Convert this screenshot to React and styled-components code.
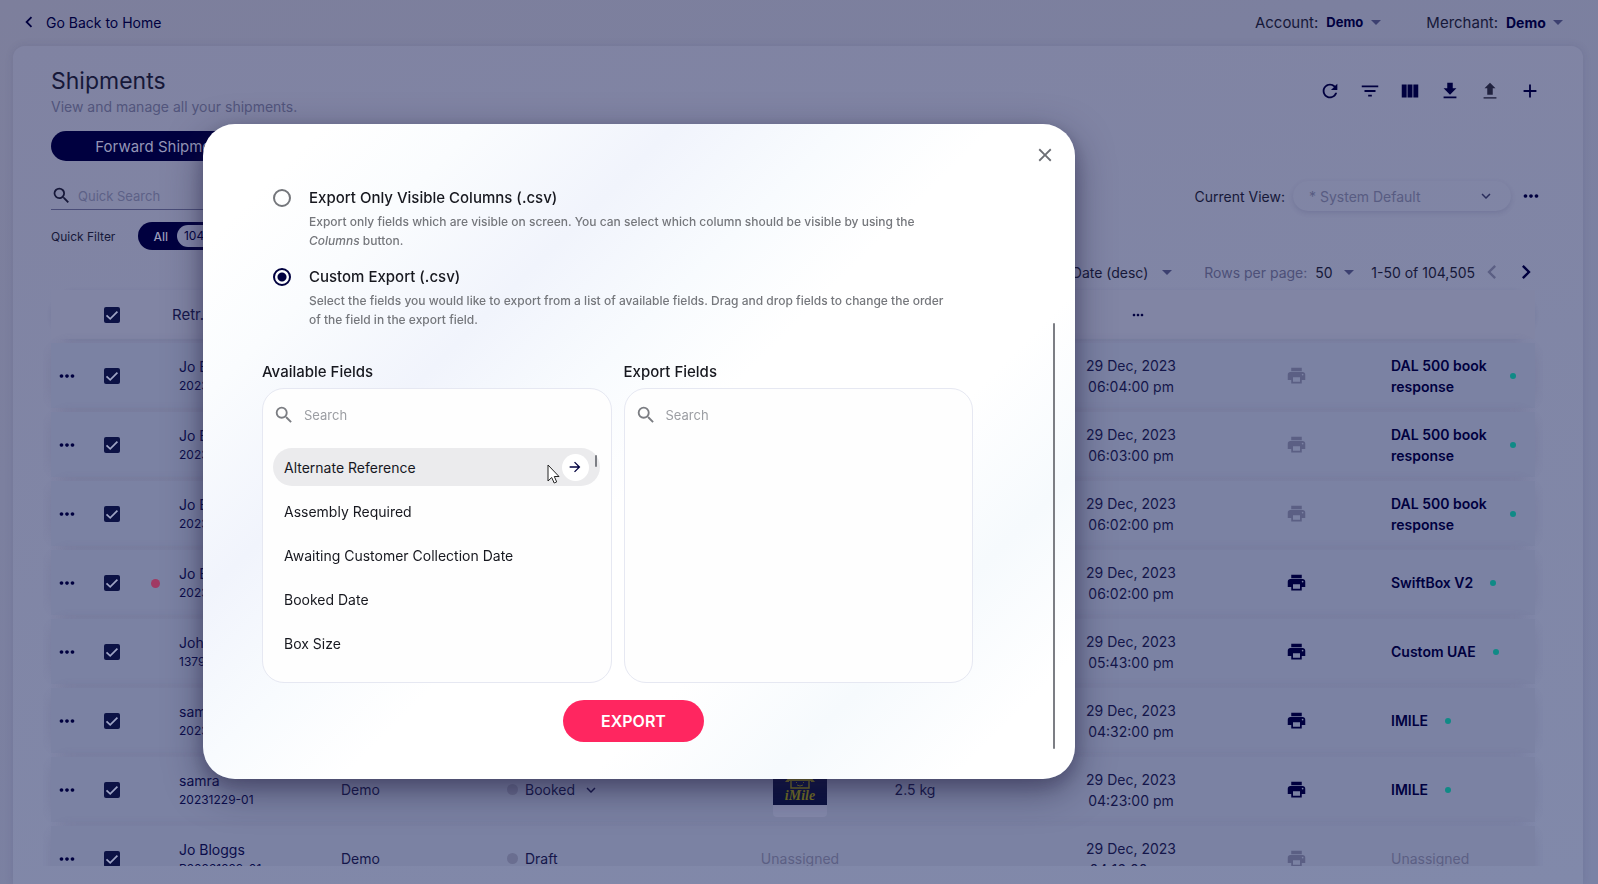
import React from "react";
import styled, { createGlobalStyle } from "styled-components";
import {
  MdRefresh, MdFilterList, MdViewColumn, MdFileDownload, MdAdd, MdMoreHoriz, MdSearch, MdClose,
  MdArrowDropDown, MdExpandMore, MdChevronLeft, MdChevronRight, MdLocalPrintshop, MdArrowForward,
} from "react-icons/md";

const navy = "#00003f";
const ink = "#161839";

const GlobalStyle = createGlobalStyle`
  * { box-sizing: border-box; }
  body {
    margin: 0;
    overflow: hidden;
    font-family: Inter, "Liberation Sans", sans-serif;
    font-size: 14px;
    color: ${ink};
    background: linear-gradient(160deg, #7d7f9c, #7a82a5);
  }
  button, input, select { font: inherit; color: inherit; }
  svg { display: block; flex: none; }
`;

const Page = styled.div`
  height: 100vh;
  display: flex;
  flex-direction: column;
  overflow: hidden;
`;

const TopBar = styled.header`
  height: 46px;
  flex: none;
  display: flex;
  align-items: center;
  padding: 0 28px 2px 18px;
  font-size: 15px;
`;

const BackLink = styled.a`
  display: flex;
  align-items: center;
  gap: 6px;
  margin-right: auto;
  color: ${navy};
  font-size: 14px;
  text-decoration: none;
`;

const Picker = styled.label`
  display: flex;
  align-items: center;
  margin-left: ${(p) => p.$gap || 0}px;
  color: ${(p) => p.$color || ink};
  white-space: nowrap;
`;

const PlainSelect = styled.select`
  appearance: none;
  border: 0;
  background: none;
  padding: 0;
  margin: 0 0 0 8px;
  width: ${(p) => p.$width}px;
  font-weight: ${(p) => (p.$bold ? 700 : 400)};
  font-size: ${(p) => p.$size || 14}px;
  color: ${(p) => (p.$bold ? navy : ink)};
`;

const Arrow = styled(MdArrowDropDown)`
  color: #3c4070;
`;

const Card = styled.main`
  flex: 1;
  min-height: 0;
  display: flex;
  flex-direction: column;
  margin: 0 15px 0 13px;
  padding: 20px 38px 18px;
  border-radius: 12px 12px 0 0;
  background: linear-gradient(170deg, #8083a2, #8189aa);
  box-shadow: 0 0 8px rgba(40, 40, 90, 0.12);
`;

const Bar = styled.div`
  flex: none;
  display: flex;
  align-items: ${(p) => p.$align || "center"};
  justify-content: space-between;
  height: ${(p) => p.$height}px;
`;

const Title = styled.h1`
  margin: 0;
  font-size: 23px;
  line-height: 30px;
  font-weight: 400;
`;

const Subtitle = styled.p`
  margin: 0;
  font-size: 14px;
  line-height: 22px;
  color: #52557c;
`;

const Tools = styled.div`
  display: flex;
  gap: 16px;
  padding: 0 3px 2px 0;
`;

const IconButton = styled.button`
  display: flex;
  align-items: center;
  justify-content: center;
  flex: none;
  width: ${(p) => p.$size || 24}px;
  height: ${(p) => p.$size || 24}px;
  padding: 0;
  border: 0;
  background: none;
  color: ${(p) => p.$color || navy};
`;

const Tab = styled.button`
  width: 226px;
  height: 30px;
  border: 0;
  border-radius: 15px;
  padding: 0;
  background: ${navy};
  color: #9496b6;
  font-size: 15px;
`;

const QuickSearch = styled.label`
  display: flex;
  align-items: center;
  gap: 6px;
  width: 300px;
  height: 32px;
  margin-top: 4px;
  padding-top: 4px;
  border-bottom: 1px solid #4a4d78;
  input {
    border: 0;
    padding: 0;
    background: none;
    outline: 0;
    font-size: 13px;
  }
  input::placeholder { color: #5d6187; opacity: 1; }
`;

const ViewGroup = styled.div`
  display: flex;
  align-items: center;
  padding: 7px 2px 0 0;
`;

const ViewSelect = styled.label`
  display: flex;
  align-items: center;
  gap: 8px;
  span { white-space: nowrap; }
`;

const ViewField = styled.div`
  display: flex;
  align-items: center;
  width: 218px;
  height: 30px;
  padding: 0 16px;
  margin-right: 8px;
  border-radius: 15px;
  color: #585c82;
  box-shadow: 0 2px 5px rgba(50, 50, 100, 0.16);
  select {
    flex: 1;
    min-width: 0;
    appearance: none;
    border: 0;
    padding: 0;
    background: none;
  }
  svg { color: #2a2d5c; }
`;

const FilterGroup = styled.div`
  display: flex;
  align-items: center;
  gap: 23px;
  font-size: 12px;
`;

const Chip = styled.button`
  display: flex;
  align-items: center;
  gap: 9px;
  height: 28px;
  padding: 0 3px 0 15px;
  border: 0;
  border-radius: 14px;
  background: ${navy};
  color: #9a9cba;
  font-size: 12px;
  font-weight: 500;
  span {
    height: 22px;
    line-height: 22px;
    padding: 0 7px;
    border-radius: 11px;
    font-weight: 400;
    background: #8286a8;
    color: ${navy};
  }
`;

const Pager = styled.div`
  display: flex;
  align-items: center;
  margin-left: auto;
  padding: 6px 2px 0 0;
`;

const TableWrap = styled.div`
  flex: 1;
  min-height: 0;
  overflow: hidden;
  margin: 0 2px 0 -8px;
  padding: 0 8px;
`;

const Table = styled.table`
  width: 100%;
  table-layout: fixed;
  border-collapse: separate;
  border-spacing: 0 4px;
  td, th { padding: 0; text-align: left; font-weight: 400; }
  th { font-size: 15px; }
  thead tr { height: 49px; border-radius: 25px; background: #8185a4; box-shadow: 0 1px 4px rgba(60, 65, 110, 0.14); }
  tbody tr { height: 65px; border-radius: 20px; background: #7b82a3; box-shadow: 0 0 8px 2px rgba(95, 95, 135, 0.18); }
`;

const Cell = styled.td`
  && {
    padding-left: ${(p) => p.$pad || 0}px;
    text-align: ${(p) => (p.$center ? "center" : "left")};
  }
  line-height: 21px;
  color: ${(p) => (p.$muted ? "#5b5f84" : "#14164a")};
  > svg, > button, > input { margin: 0 auto; }
`;

const Check = styled.input`
  appearance: none;
  display: block;
  width: 16px;
  height: 16px;
  margin: 0 auto;
  border-radius: 2px;
  background: #0c1245 url("data:image/svg+xml,%3Csvg xmlns='http://www.w3.org/2000/svg' viewBox='0 0 16 16'%3E%3Cpath d='M2.5 8.3l3.7 3.6 7.2-7.3' fill='none' stroke='%239ea4c4' stroke-width='1.7'/%3E%3C/svg%3E") center / 16px 16px;
`;

const Dot = styled.span`
  display: inline-block;
  flex: none;
  width: ${(p) => p.$size}px;
  height: ${(p) => p.$size}px;
  border-radius: 50%;
  background: ${(p) => p.$color};
`;

const Name = styled.div`
  line-height: 20px;
  white-space: nowrap;
  color: #0a0c4a;
`;

const Reference = styled.div`
  line-height: 18px;
  font-size: 12px;
  white-space: nowrap;
  color: #0a0c4a;
`;

const Inline = styled.div`
  display: flex;
  align-items: center;
  gap: ${(p) => p.$gap}px;
`;

const Carrier = styled.span`
  max-width: 102px;
  font-weight: 600;
  color: ${navy};
`;

const Backdrop = styled.div`
  position: fixed;
  inset: 0;
  padding: 124px 523px 105px 203px;
  pointer-events: none;
`;

const Dialog = styled.section`
  position: relative;
  min-height: 655px;
  padding: 60px 102px 36px 59px;
  border-radius: 32px;
  color: #17181f;
  background: linear-gradient(135deg, #ffffff 8%, #fafcfe 18%, #f1f4fc 31%, #f8fbfe 42%, #ffffff 52%, #ffffff 68%, #f6fafd 80%, #ffffff 92%);
  box-shadow: 0 12px 36px rgba(30, 25, 60, 0.5), 0 6px 16px rgba(30, 25, 60, 0.2);
`;

const CloseButton = styled(IconButton)`
  position: absolute;
  top: 19px;
  right: 18px;
`;

const Thumb = styled.div`
  position: absolute;
  background: #7c7e84;
  width: 2px;
  border-radius: 1px;
  top: ${(p) => p.$top}px;
  right: ${(p) => p.$right}px;
  height: ${(p) => p.$height}px;
`;

const Option = styled.label`
  display: grid;
  grid-template-columns: 18px 1fr;
  column-gap: 18px;
  padding: 0 22px 0 11px;
  margin-bottom: 13px;
`;

const Radio = styled.input`
  appearance: none;
  width: 18px;
  height: 18px;
  margin: 5px 0 0;
  border: 2px solid #74767b;
  border-radius: 50%;
  &:checked {
    border-color: ${navy};
    background: radial-gradient(circle, ${navy} 4px, transparent 5px);
  }
`;

const OptionTitle = styled.span`
  line-height: 28px;
  font-size: 15px;
  font-weight: 500;
`;

const OptionHelp = styled.span`
  grid-column: 2;
  line-height: 19px;
  font-size: 12px;
  font-weight: 500;
  color: #75777c;
`;

const Lists = styled.div`
  display: grid;
  grid-template-columns: 1fr 1fr;
  gap: 12px;
  margin-top: 31px;
`;

const ListTitle = styled.h2`
  margin: 0 0 4px;
  line-height: 24px;
  font-size: 15px;
  font-weight: 500;
`;

const Panel = styled.div`
  height: 295px;
  padding: 10px;
  border: 1px solid #e6e8f2;
  border-radius: 22px;
  background: #fefefe;
`;

const PanelSearch = styled.label`
  display: flex;
  align-items: center;
  gap: 9px;
  height: 32px;
  color: #7b7d82;
  input {
    flex: 1;
    min-width: 0;
    border: 0;
    padding: 0;
    background: none;
    outline: 0;
    font-size: 13px;
  }
  input::placeholder { color: #9c9ea3; opacity: 1; }
`;

const FieldList = styled.ul`
  position: relative;
  display: flex;
  flex-direction: column;
  gap: 6px;
  margin: 17px 1px 0 0;
  padding: 0;
  list-style: none;
`;

const Field = styled.li`
  display: flex;
  align-items: center;
  justify-content: space-between;
  height: 38px;
  padding: 0 11px;
  border-radius: 19px;
  background: ${(p) => (p.$active ? "#ebebed" : "transparent")};
`;

const MoveButton = styled(IconButton)`
  border-radius: 50%;
  background: #ffffff;
`;

const Footer = styled.footer`
  display: flex;
  justify-content: center;
  padding: 17px 0 0 32px;
`;

const ExportButton = styled.button`
  width: 141px;
  height: 42px;
  padding: 0;
  border: 0;
  border-radius: 21px;
  background: #ff2660;
  color: #ffffff;
  font-size: 16px;
  font-weight: 600;
`;

const Cursor = styled.svg`
  position: absolute;
  top: 16px;
  right: 40px;
`;

const Upload = () => (
  <svg width="22" height="22" viewBox="0 0 24 24">
    <path d="M12 3l-6 6h3v7h6V9h3z" fill="#20223f" />
    <path d="M5 19.500h14" stroke="#20223f" strokeWidth="1.500" />
  </svg>
);

const IMileLogo = () => (
  <svg width="54" height="54" viewBox="0 0 54 54" role="img" aria-label="iMile">
    <path d="M0 42h54v8q0 4-4 4H4q-4 0-4-4z" fill="#8489ab" />
    <rect width="54" height="42" fill="#0a1140" />
    <path d="M12 19l5-6h20l5 6h-4v-1H16v1z" fill="#77731f" />
    <path d="M18 18v7h18v-7" fill="none" stroke="#77731f" strokeWidth="1.500" />
    <path d="M23.500 19v1M30.500 19v1M24 22q3 2 6 0" fill="none" stroke="#77731f" strokeWidth="1" />
    <text x="27" y="37" textAnchor="middle" fontFamily="Liberation Serif, serif" fontStyle="italic" fontWeight="700" fontSize="14" fill="#77731f">iMile</text>
  </svg>
);

const columns = [32, 58, 28, 162, 166, 243, 120, 110, 71, 180, 150, 164];

const dal = { carrier: "DAL 500 book response", print: false };
const shipments = [
  { name: "Jo Bloggs", id: "20231229-07", time: "06:04:00 pm", ...dal },
  { name: "Jo Bloggs", id: "20231229-06", time: "06:03:00 pm", ...dal },
  { name: "Jo Bloggs", id: "20231229-05", time: "06:02:00 pm", ...dal },
  { name: "Jo Bloggs", id: "20231229-04", time: "06:02:00 pm", carrier: "SwiftBox V2", print: true, alert: true },
  { name: "John", id: "1379", time: "05:43:00 pm", carrier: "Custom UAE", print: true },
  { name: "samra", id: "20231229-02", time: "04:32:00 pm", carrier: "IMILE", print: true },
  { name: "samra", id: "20231229-01", time: "04:23:00 pm", carrier: "IMILE", print: true, shown: "Booked" },
  { name: "Jo Bloggs", id: "R20231229-01", time: "04:16:00 pm", print: false, shown: "Draft" },
];

const fields = ["Alternate Reference", "Assembly Required", "Awaiting Customer Collection Date", "Booked Date", "Box Size"];

function ShipmentRow({ row }) {
  return (
    <tr>
      <Cell><IconButton aria-label="Row actions"><MdMoreHoriz size={22} /></IconButton></Cell>
      <Cell><Check type="checkbox" defaultChecked aria-label={`Select ${row.name}`} /></Cell>
      <Cell $center>{row.alert && <Dot $size={9} $color="#a03a63" />}</Cell>
      <Cell $pad={10}><Name>{row.name}</Name><Reference>{row.id}</Reference></Cell>
      <Cell $pad={10}>{row.shown && "Demo"}</Cell>
      <Cell $pad={10}>
        {row.shown && (
          <Inline $gap={7}>
            <Dot $size={11} $color="#6a6e90" />{row.shown}
            {row.carrier && <MdExpandMore size={18} />}
          </Inline>
        )}
      </Cell>
      <Cell $center $muted>{row.shown && (row.carrier ? <IMileLogo /> : "Unassigned")}</Cell>
      <Cell $center>{row.shown && row.carrier && "2.5 kg"}</Cell>
      <Cell />
      <Cell $center>29 Dec, 2023<br />{row.time}</Cell>
      <Cell>
        <IconButton aria-label="Print label" disabled={!row.print} $color={row.print ? navy : "#5b5f84"}>
          <MdLocalPrintshop size={21} />
        </IconButton>
      </Cell>
      <Cell $pad={20} $muted={!row.carrier}>
        {row.carrier ? (
          <Inline $gap={17}><Carrier>{row.carrier}</Carrier><Dot $size={6} $color="#108a86" /></Inline>
        ) : "Unassigned"}
      </Cell>
    </tr>
  );
}

function ExportDialog() {
  return (
    <Backdrop>
      <Dialog role="dialog" aria-label="Export shipments">
        <CloseButton aria-label="Close" $color="#6c6e74"><MdClose size={22} /></CloseButton>
        <Option>
          <Radio type="radio" name="export" />
          <OptionTitle>Export Only Visible Columns (.csv)</OptionTitle>
          <OptionHelp>
            Export only fields which are visible on screen. You can select which column should be visible by using the <i>Columns</i> button.
          </OptionHelp>
        </Option>
        <Option>
          <Radio type="radio" name="export" defaultChecked />
          <OptionTitle>Custom Export (.csv)</OptionTitle>
          <OptionHelp>
            Select the fields you would like to export from a list of available fields. Drag and drop fields to change the order of the field in the export field.
          </OptionHelp>
        </Option>
        <Lists>
          <div>
            <ListTitle>Available Fields</ListTitle>
            <Panel>
              <PanelSearch><MdSearch size={22} /><input placeholder="Search" aria-label="Search available fields" /></PanelSearch>
              <FieldList>
                {fields.map((name, i) => (
                  <Field key={name} $active={i === 0}>
                    {name}
                    {i === 0 && <MoveButton aria-label="Add field" $size={27}><MdArrowForward size={16} /></MoveButton>}
                  </Field>
                ))}
                <Thumb $top={7} $right={3} $height={12} />
                <Cursor width="13" height="20" viewBox="0 0 13 20">
                  <path d="M1 1v16l3.700-3.500 2.500 5.500 2.500-1.100-2.400-5.400H12z" fill="#fff" stroke="#222" strokeWidth="1" />
                </Cursor>
              </FieldList>
            </Panel>
          </div>
          <div>
            <ListTitle>Export Fields</ListTitle>
            <Panel>
              <PanelSearch><MdSearch size={22} /><input placeholder="Search" aria-label="Search export fields" /></PanelSearch>
            </Panel>
          </div>
        </Lists>
        <Footer><ExportButton>EXPORT</ExportButton></Footer>
        <Thumb $top={199} $right={20} $height={426} />
      </Dialog>
    </Backdrop>
  );
}

export default function App() {
  return (
    <>
      <GlobalStyle />
      <Page>
        <TopBar>
          <BackLink href="#home"><MdChevronLeft size={22} />Go Back to Home</BackLink>
          <Picker>Account:<PlainSelect $bold $width={38} $size={13}><option>Demo</option></PlainSelect><Arrow size={24} /></Picker>
          <Picker $gap={38}>Merchant:<PlainSelect $bold $width={40} $size={14}><option>Demo</option></PlainSelect><Arrow size={24} /></Picker>
        </TopBar>
        <Card>
          <Bar $height={52}>
            <div><Title>Shipments</Title><Subtitle>View and manage all your shipments.</Subtitle></div>
            <Tools>
              <IconButton aria-label="Refresh"><MdRefresh size={22} /></IconButton>
              <IconButton aria-label="Filter"><MdFilterList size={22} /></IconButton>
              <IconButton aria-label="Columns"><MdViewColumn size={22} /></IconButton>
              <IconButton aria-label="Download"><MdFileDownload size={22} /></IconButton>
              <IconButton aria-label="Upload"><Upload /></IconButton>
              <IconButton aria-label="Add"><MdAdd size={22} /></IconButton>
            </Tools>
          </Bar>
          <Bar $height={56}><Tab>Forward Shipments</Tab></Bar>
          <Bar $height={46} $align="flex-start">
            <QuickSearch><MdSearch size={21} /><input placeholder="Quick Search" aria-label="Quick search" /></QuickSearch>
            <ViewGroup>
              <ViewSelect>
                <span>Current View:</span>
                <ViewField><select><option>* System Default</option></select><MdExpandMore size={18} /></ViewField>
              </ViewSelect>
              <IconButton aria-label="View options"><MdMoreHoriz size={22} /></IconButton>
            </ViewGroup>
          </Bar>
          <Bar $height={32}>
            <FilterGroup>Quick Filter<Chip>All<span>104505</span></Chip></FilterGroup>
          </Bar>
          <Bar $height={34}>
            <Pager>
              <Picker>Sort by:<PlainSelect $width={140}><option>Created Date (desc)</option></PlainSelect><Arrow size={24} /></Picker>
              <Picker $gap={25} $color="#4d5078">Rows per page:<PlainSelect $width={22}><option>50</option></PlainSelect><Arrow size={24} /></Picker>
              <Picker as="span" $gap={10}>1-50 of 104,505</Picker>
              <IconButton aria-label="Previous page" $size={34} $color="#5b5f84" disabled><MdChevronLeft size={28} /></IconButton>
              <IconButton aria-label="Next page" $size={34}><MdChevronRight size={28} /></IconButton>
            </Pager>
          </Bar>
          <TableWrap>
            <Table>
              <colgroup>{columns.map((w, i) => <col key={i} style={{ width: w }} />)}</colgroup>
              <thead>
                <tr>
                  <Cell as="th" />
                  <Cell as="th"><Check type="checkbox" defaultChecked aria-label="Select all" /></Cell>
                  <Cell as="th" />
                  <Cell as="th" $pad={3}>Retr. Name</Cell>
                  <Cell as="th" colSpan={5} />
                  <Cell as="th" $pad={14}><IconButton aria-label="More columns"><MdMoreHoriz size={16} /></IconButton></Cell>
                  <Cell as="th" colSpan={2} />
                </tr>
              </thead>
              <tbody>{shipments.map((row, i) => <ShipmentRow key={i} row={row} />)}</tbody>
            </Table>
          </TableWrap>
        </Card>
      </Page>
      <ExportDialog />
    </>
  );
}
